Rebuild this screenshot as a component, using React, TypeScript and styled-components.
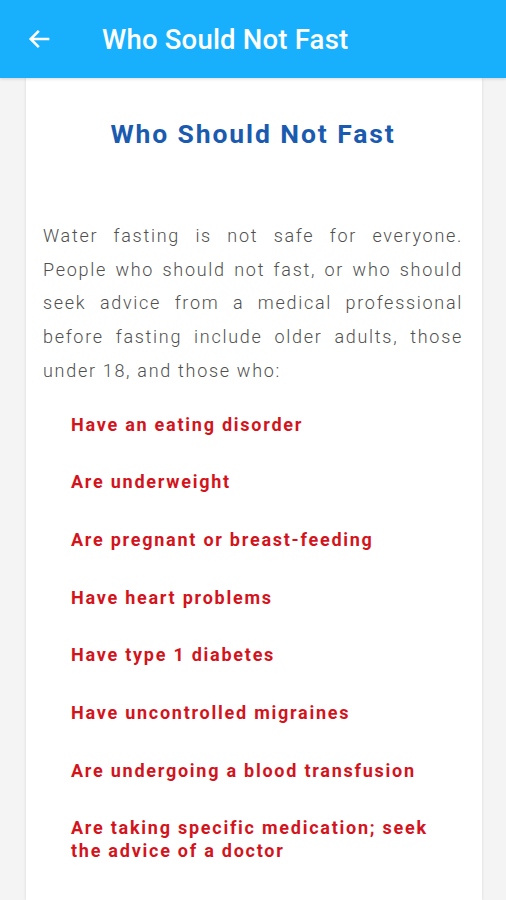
import React from 'react';
import styled, { createGlobalStyle } from 'styled-components';

const GlobalStyle = createGlobalStyle`
  html, body {
    margin: 0;
    padding: 0;
    background: #f4f4f4;
    font-family: Roboto, 'Liberation Sans', sans-serif;
  }
`;

const items = [
  'Have an eating disorder',
  'Are underweight',
  'Are pregnant or breast-feeding',
  'Have heart problems',
  'Have type 1 diabetes',
  'Have uncontrolled migraines',
  'Are undergoing a blood transfusion',
  'Are taking specific medication; seek the advice of a doctor',
];

const BackArrow = () => (
  <svg width="28" height="28" viewBox="0 0 24 24" fill="none">
    <path d="M20 12H4.5M11 5l-7 7 7 7" stroke="#fff" strokeWidth="2.2" />
  </svg>
);

export default function App() {
  return (
    <Screen>
      <GlobalStyle />
      <AppBar>
        <BackButton>
          <BackArrow />
        </BackButton>
        <BarTitle>Who Sould Not Fast</BarTitle>
      </AppBar>
      <Card>
        <Heading>Who Should Not Fast</Heading>
        <Paragraph>
          Water fasting is not safe for everyone. People who should not fast, or who should seek
          advice from a medical professional before fasting include older adults, those under 18,
          and those who:
        </Paragraph>
        <List>
          {items.map((item) => (
            <Item key={item}>{item}</Item>
          ))}
        </List>
      </Card>
    </Screen>
  );
}

const Screen = styled.div`
  width: 506px;
  height: 900px;
  overflow: hidden;
  display: flex;
  flex-direction: column;
`;

const AppBar = styled.header`
  height: 78px;
  flex-shrink: 0;
  background: #18b0fd;
  display: flex;
  align-items: center;
  padding-left: 25px;
  box-shadow: 0 1px 3px rgba(0, 0, 0, 0.15);
  position: relative;
  z-index: 1;
`;

const BackButton = styled.div`
  width: 30px;
  height: 30px;
  display: flex;
  align-items: center;
  justify-content: center;
  margin-right: 47px;
`;

const BarTitle = styled.h1`
  margin: 0;
  color: #fff;
  font-size: 27.5px;
  font-weight: 500;
  letter-spacing: 0.2px;
`;

const Card = styled.main`
  margin: 0 24px 0 26px;
  flex: 1;
  background: #fff;
  box-shadow: 0 0 3px rgba(0, 0, 0, 0.12);
  padding: 40px 19px 0 17px;
`;

const Heading = styled.h2`
  margin: 0 0 70px;
  text-align: center;
  color: #1a5bb0;
  font-size: 26.5px;
  font-weight: 700;
  letter-spacing: 1.9px;
`;

const Paragraph = styled.p`
  margin: 0;
  color: #505050;
  font-size: 18px;
  font-weight: 300;
  line-height: 33.7px;
  letter-spacing: 1.7px;
  text-align: justify;
`;

const List = styled.ul`
  list-style: none;
  margin: 25px 0 0;
  padding: 0 12px 0 28px;
  display: flex;
  flex-direction: column;
  gap: 34.7px;
`;

const Item = styled.li`
  color: #d3141c;
  font-size: 18px;
  font-weight: 700;
  letter-spacing: 1.75px;
  line-height: 23px;
`;
